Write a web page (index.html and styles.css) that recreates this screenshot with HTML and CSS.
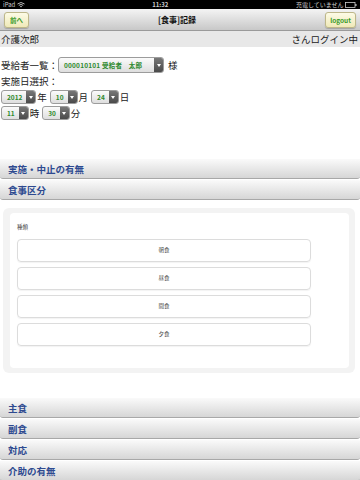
FILE: index.html
```html
<!DOCTYPE html>
<html lang="ja">
<head>
  <meta charset="UTF-8">
  <meta name="viewport" content="width=device-width, initial-scale=1.0">
  <title>[食事]記録</title>
  <link rel="stylesheet" href="styles.css">
</head>
<body>
  <div class="status">
    <span class="st-left">iPad
      <svg width="8" height="6" viewBox="0 0 8 6"><path d="M0.5 2 Q4 -1 7.5 2 M1.8 3.4 Q4 1.5 6.2 3.4 M3.1 4.8 Q4 4 4.9 4.8" stroke="#ccc" stroke-width="0.9" fill="none"/></svg>
    </span>
    <span class="st-time">11:32</span>
    <span class="st-right">充電していません
      <svg width="12" height="6" viewBox="0 0 12 6"><rect x="0.5" y="0.5" width="9.5" height="5" fill="none" stroke="#ccc" stroke-width="0.8"/><rect x="10.3" y="2" width="1.2" height="2" fill="#ccc"/></svg>
    </span>
  </div>

  <header class="topbar">
    <a class="hbtn" href="#">前へ</a>
    <h1>[食事]記録</h1>
    <a class="hbtn" href="#">logout</a>
  </header>

  <div class="loginbar">
    <span>介護次郎</span>
    <span>さんログイン中</span>
  </div>

  <div class="form">
    <div class="row"><span class="lbl">受給者一覧：</span><span class="sel wide"><b>000010101 受給者　太郎</b><i></i></span>様</div>
    <div class="row">実施日選択：</div>
    <div class="row">
      <span class="sel"><b>2012</b><i></i></span>年
      <span class="sel"><b>10</b><i></i></span>月
      <span class="sel"><b>24</b><i></i></span>日
    </div>
    <div class="row">
      <span class="sel"><b>11</b><i></i></span>時
      <span class="sel"><b>30</b><i></i></span>分
    </div>
  </div>

  <div class="group top">
    <div class="coll">実施・中止の有無</div>
    <div class="coll">食事区分</div>
  </div>

  <div class="panel">
    <div class="panel-inner">
      <div class="label">種類</div>
      <div class="choices">
        <div class="choice">朝食</div>
        <div class="choice">昼食</div>
        <div class="choice">間食</div>
        <div class="choice">夕食</div>
      </div>
    </div>
  </div>

  <div class="group">
    <div class="coll">主食</div>
    <div class="coll">副食</div>
    <div class="coll">対応</div>
    <div class="coll">介助の有無</div>
  </div>
</body>
</html>
```

FILE: styles.css
```css
body {
  margin: 0;
  font-family: "Noto Sans CJK JP", "Liberation Sans", sans-serif;
  background-color: #fff;
  color: #222;
  font-size: 9.5px;
  overflow: hidden;
}
.status {
  height: 9px;
  background-color: #000;
  color: #ccc;
  font-size: 6px;
  line-height: 9px;
  display: flex;
  justify-content: space-between;
  align-items: center;
  padding: 0 3px;
}
.status svg {
  vertical-align: middle;
}
.st-time {
  font-weight: bold;
}
.topbar {
  height: 22px;
  background: linear-gradient(#f4f4f4, #c8c8c8);
  border-bottom: 1px solid #9a9a9a;
  display: flex;
  justify-content: space-between;
  align-items: center;
  padding: 0 4px;
  box-sizing: border-box;
}
.topbar h1 {
  margin: 0;
  font-size: 8px;
  font-weight: bold;
  color: #111;
}
.hbtn {
  display: block;
  padding: 0 4px;
  height: 14px;
  line-height: 14px;
  font-size: 6.5px;
  font-weight: bold;
  color: #3a9a2a;
  text-decoration: none;
  background: linear-gradient(#fdfbe6, #efe9b8);
  border: 1px solid #bdb78a;
  border-radius: 3px;
  box-shadow: 0 1px 1px rgba(0,0,0,0.2);
}
.hbtn:first-child {
  padding: 0 5px;
}
.loginbar {
  height: 16px;
  background-color: #e8e8e8;
  display: flex;
  justify-content: space-between;
  align-items: center;
  padding: 0 2px 0 1px;
}
.form {
  padding: 10px 1px 0;
}
.row {
  display: flex;
  align-items: center;
  min-height: 16px;
  white-space: nowrap;
}
.lbl {
  width: 56px;
}
.sel {
  display: inline-flex;
  align-items: center;
  justify-content: space-between;
  height: 14px;
  padding-left: 5px;
  margin: 0 1px 0 3px;
  font-size: 6.5px;
  color: #2e8a2e;
  background: linear-gradient(#fbfbfb, #dedede);
  border: 1px solid #9c9c9c;
  border-radius: 3px;
  box-sizing: border-box;
  overflow: hidden;
  min-width: 23px;
}
.row .sel:first-child {
  margin-left: 0;
}
.sel i {
  display: flex;
  align-items: center;
  justify-content: center;
  width: 9px;
  height: 100%;
  margin-left: 4px;
  background: linear-gradient(#777, #4a4a4a);
}
.sel i::after {
  content: "";
  border-left: 2px solid transparent;
  border-right: 2px solid transparent;
  border-top: 3px solid #fff;
}
.sel.wide {
  width: 106px;
  height: 16px;
  margin: 0 4px 0 1px;
  letter-spacing: 0.2px;
}
.group.top {
  margin-top: 38px;
}
.coll {
  height: 20px;
  line-height: 20px;
  padding-left: 8px;
  font-weight: bold;
  color: #2e4a90;
  background: linear-gradient(#fafafa, #d6d6d6);
  border-bottom: 1px solid #a8a8a8;
  border-radius: 0 0 3px 3px;
  box-sizing: border-box;
  margin-bottom: 1px;
}
.panel {
  margin: 8px 5px 0 3px;
  padding: 5px 6px 5px 7px;
  background-color: #f3f3f3;
  border-radius: 6px;
}
.panel-inner {
  background-color: #fff;
  border-radius: 4px;
  padding: 10px 38px 22px 7px;
}
.label {
  font-size: 5.5px;
  line-height: 8px;
  color: #333;
  margin-bottom: 8px;
}
.choices {
  display: flex;
  flex-direction: column;
  gap: 5px;
}
.choice {
  height: 23px;
  line-height: 21px;
  text-align: center;
  font-size: 5.5px;
  color: #444;
  border: 1px solid #dcdcdc;
  border-radius: 4px;
  box-sizing: border-box;
  box-shadow: 0 1px 1px rgba(0,0,0,0.05);
}
.group {
  margin-top: 25px;
}
```
